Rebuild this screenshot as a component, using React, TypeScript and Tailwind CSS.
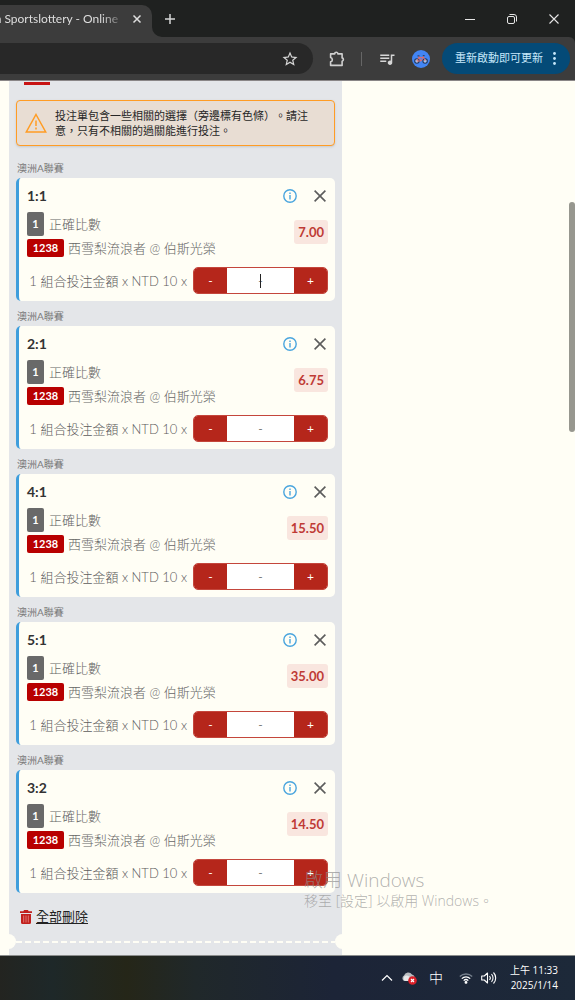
import { useState } from "react";
import { MdQueueMusic, MdStarBorder } from "react-icons/md";

type Bet = {
  id: number;
  score: string;
  odds: string;
};

const bets: Bet[] = [
  { id: 1, score: "1:1", odds: "7.00" },
  { id: 2, score: "2:1", odds: "6.75" },
  { id: 3, score: "4:1", odds: "15.50" },
  { id: 4, score: "5:1", odds: "35.00" },
  { id: 5, score: "3:2", odds: "14.50" },
];

const PuzzleIcon = () => (
  <svg viewBox="0 0 16 16" className="size-4" fill="none" stroke="#d0d0d0" strokeWidth="1.6" strokeLinejoin="round">
    <path d="M1.6 2.9h4.1a1.6 1.6 0 0 1 3.2 0h4.2v4a1.7 1.7 0 0 1 0 3.3v4.2H1.6v-3.6a2.2 2.2 0 0 0 0-4.3z" />
  </svg>
);

const BikeAvatar = () => (
  <svg viewBox="0 0 18 18" className="size-[18px]">
    <circle cx="9" cy="9" r="9" fill="#4285f4" />
    <circle cx="4.9" cy="11" r="2.2" fill="#a9c4ee" stroke="#22355a" strokeWidth="1.1" />
    <circle cx="13.1" cy="11" r="2.2" fill="#a9c4ee" stroke="#22355a" strokeWidth="1.1" />
    <path d="M4.900 11 6.800 7.600h4.600L9 11zM9 11 6.400 6M13.100 11l-2-5" fill="none" stroke="#ee6a5f" strokeWidth="0.9" />
    <path d="M5.500 5.900h2M10.800 5.700h1.800" stroke="#22355a" strokeWidth="1" />
  </svg>
);

const BrowserHeader = () => (
  <header className="shrink-0 bg-[#1f2120] font-['Open_Sans','Noto_Sans_CJK_TC',sans-serif]">
    <div className="flex h-[37px] items-end">
      <div className="relative flex h-8 w-[152px] items-center rounded-tr-[10px] bg-[#3c3c3c] pb-1">
        <div className="flex w-[118px] justify-end overflow-hidden font-[Lato,sans-serif] text-xs whitespace-nowrap text-[#dedede] [mask-image:linear-gradient(to_right,black_85%,rgba(0,0,0,0.35))]">
          n Sportslottery - Online
        </div>
        <button aria-label="關閉分頁" className="ml-[14px]">
          <svg viewBox="0 0 10 10" className="size-[10px]" stroke="#dedede" strokeWidth="1.5">
            <path d="m1.5 1.5 7 7m0-7-7 7" />
          </svg>
        </button>
        <svg viewBox="0 0 10 10" className="absolute bottom-0 left-full size-[10px]" fill="#3c3c3c">
          <path d="M0 0v10h10A10 10 0 0 1 0 0" />
        </svg>
      </div>
      <div className="flex h-full flex-1 items-center">
        <button aria-label="新增分頁" className="ml-3">
          <svg viewBox="0 0 12 12" className="size-3" stroke="#d6d6d6" strokeWidth="1.5">
            <path d="M6 1v10M1 6h10" />
          </svg>
        </button>
        <div className="ml-auto flex items-center gap-8 pr-4">
          <button aria-label="最小化">
            <svg viewBox="0 0 10 10" className="size-[10px]" stroke="#e6e6e6">
              <path d="M0 5.5h10" />
            </svg>
          </button>
          <button aria-label="還原">
            <svg viewBox="0 0 10 10" className="size-[10px]" fill="none" stroke="#e6e6e6">
              <rect x="0.5" y="2.5" width="7" height="7" rx="1.5" />
              <path d="M2.5.5H7A2.5 2.5 0 0 1 9.5 3v4.5" />
            </svg>
          </button>
          <button aria-label="關閉">
            <svg viewBox="0 0 10 10" className="size-[10px]" stroke="#e6e6e6" strokeWidth="1.1">
              <path d="m.5.5 9 9m0-9-9 9" />
            </svg>
          </button>
        </div>
      </div>
    </div>

    <div className="flex h-11 items-center rounded-tr-md border-b border-[#8a8687] bg-[#3c3c3c] pr-[5px]">
      <div className="flex h-[31px] flex-1 items-center justify-end rounded-r-full bg-[#282828] pr-[14px]">
        <button aria-label="加入書籤">
          <MdStarBorder className="size-[18px] text-[#d6d6d6]" />
        </button>
      </div>
      <div className="flex items-center gap-4 px-4 pr-3">
        <button aria-label="擴充功能">
          <PuzzleIcon />
        </button>
        <span className="h-[14px] w-px bg-[#666]" />
        <button aria-label="媒體控制">
          <MdQueueMusic className="size-[18px] text-[#d6d6d6]" />
        </button>
        <button aria-label="個人資料">
          <BikeAvatar />
        </button>
      </div>
      <button className="flex h-[31px] items-center gap-[10px] rounded-full bg-[#044a77] pr-[14px] pl-[13px] text-[11px] text-[#c6e8fb]">
        重新啟動即可更新
        <svg viewBox="0 0 3 13" className="h-[13px] w-[3px]" fill="#c6e8fb">
          <circle cx="1.5" cy="1.5" r="1.4" />
          <circle cx="1.5" cy="6.5" r="1.4" />
          <circle cx="1.5" cy="11.5" r="1.4" />
        </svg>
      </button>
    </div>
  </header>
);

const BetCard = ({ bet, focused }: { bet: Bet; focused: boolean }) => {
  const [amount, setAmount] = useState("");
  const fieldId = `stake-${bet.id}`;

  const change = (step: number) => {
    const next = Math.max(0, Number(amount || 0) + step);
    setAmount(next ? String(next) : "");
  };

  return (
    <article className="pt-2">
      <p className="mb-[3px] pl-px text-[10px] leading-[14px] text-[#7a7a7a]">澳洲A聯賽</p>
      <div className="rounded-[5px] border-l-3 border-[#3f9edc] bg-[#fffef5] pt-2 pr-[7px] pb-[7px] pl-2">
        <div className="flex h-5 items-center">
          <h3 className="text-sm leading-5 font-bold text-[#333]">{bet.score}</h3>
          <button aria-label="資訊" className="ml-auto">
            <svg viewBox="0 0 14 14" className="size-[14px]" fill="none" stroke="#4aa5de" strokeWidth="1.4">
              <circle cx="7" cy="7" r="6.2" />
              <path d="M7 6v4.5M7 3.5V5" />
            </svg>
          </button>
          <button aria-label="移除" className="mr-[2px] ml-[17px]">
            <svg viewBox="0 0 12 12" className="size-3" stroke="#5c5c5c" strokeWidth="1.6">
              <path d="m.6.6 10.8 10.8m0-10.8L.6 11.4" />
            </svg>
          </button>
        </div>

        <div className="mt-[6px] flex items-start justify-between text-[13px] text-[#666]">
          <div>
            <div className="flex h-6 items-center gap-[5px]">
              <span className="flex h-6 w-[17px] items-center justify-center rounded-[2px] bg-[#696969] text-[11px] font-bold text-white">
                1
              </span>
              <span className="leading-5 font-light">正確比數</span>
            </div>
            <div className="mt-[3px] flex h-[18px] items-center gap-1">
              <span className="flex h-[18px] w-[37px] items-center justify-center rounded-[2px] bg-[#b80000] text-[11px] font-bold text-white">
                1238
              </span>
              <span className="leading-[18px] font-light">西雪梨流浪者 @ 伯斯光榮</span>
            </div>
          </div>
          <span className="mt-2 rounded-[3px] bg-[#f9e6df] px-1 text-[13px] leading-6 font-bold text-[#bf3a35]">
            {bet.odds}
          </span>
        </div>

        <div className="mt-[10px] flex items-center justify-end gap-[6px]">
          <label htmlFor={fieldId} className="text-[13px] leading-5 font-light text-[#5c5c5c]">
            1 組合投注金額 x NTD 10 x
          </label>
          <div className="relative flex h-[27px] w-[135px] overflow-hidden rounded-[5px] border border-[#c4463c] bg-white text-xs">
            <button aria-label="減少" onClick={() => change(-1)} className="w-[33px] bg-[#b5261b] text-white">
              -
            </button>
            <input
              id={fieldId}
              value={amount}
              onChange={(e) => setAmount(e.target.value)}
              placeholder="-"
              className="min-w-0 flex-1 bg-white text-center text-[#333] outline-none placeholder:text-[#777]"
            />
            <button aria-label="增加" onClick={() => change(1)} className="w-[33px] bg-[#b5261b] text-white">
              +
            </button>
            {focused && <span className="absolute inset-0 m-auto h-[14px] w-px bg-[#222]" />}
          </div>
        </div>
      </div>
    </article>
  );
};

const BetSlip = () => (
  <section className="relative h-full w-full max-w-[333px] bg-[#e4e6e9] px-[7px] pt-px">
    <div className="ml-2 h-[3px] w-[26px] bg-[#c81414]" />

    <div
      role="alert"
      className="mt-[15px] mb-[7px] flex items-center gap-2 rounded-[4px] border border-[#ff9c24] bg-[#e8ddd3] py-[7px] pr-4 pl-2 shadow"
    >
      <svg viewBox="0 0 22 20" className="h-5 w-[22px] shrink-0" fill="none" stroke="#ff9c24" strokeWidth="1.5">
        <path d="M11 1.500 20.700 19H1.300z" />
        <path d="M11 7.500v5.500M11 14.500v2" />
      </svg>
      <p className="text-[11px] leading-[15px] text-[#262626] [text-spacing-trim:space-all]">
        投注單包含一些相關的選擇（旁邊標有色條）。請注意，只有不相關的過關能進行投注。
      </p>
    </div>

    {bets.map((bet, index) => (
      <BetCard key={bet.id} bet={bet} focused={index === 0} />
    ))}

    <button className="mt-[14px] ml-1 flex h-5 items-center gap-1 text-[13px] text-[#222]">
      <svg viewBox="0 0 12 14" className="h-[14px] w-3" fill="#c1201d">
        <path d="M4 0h4l.6 1.300H12V3H0V1.300h3.400zM1 4h10v8.500A1.500 1.500 0 0 1 9.500 14h-7A1.500 1.500 0 0 1 1 12.500z" />
        <path d="M3.700 5.500v7M6 5.500v7M8.300 5.500v7" stroke="#ef9c98" strokeWidth="0.700" />
      </svg>
      <span className="underline underline-offset-2">全部刪除</span>
    </button>

    {/* ticket tear line */}
    <div className="mt-[14px] h-[2px] bg-[repeating-linear-gradient(to_right,#fffef5_0_6px,transparent_6px_9px)]">
      <span className="absolute -left-2 -mt-[7px] size-[15px] rounded-full bg-[#fffef5]" />
      <span className="absolute -right-2 -mt-[7px] size-[15px] rounded-full bg-[#fffef5]" />
    </div>
  </section>
);

const Taskbar = () => (
  <footer className="flex h-[45px] shrink-0 items-center justify-end border-t border-[#8b8d8c] bg-[linear-gradient(to_right,#232420,#1e2829_9%,#252618_22%,#20282a_34%,#1c2437_58%,#1d2939)] pr-[17px] font-['Open_Sans','Noto_Sans_CJK_TC',sans-serif] text-white">
    <button aria-label="顯示隱藏的圖示">
      <svg viewBox="0 0 12 8" className="h-2 w-3" fill="none" stroke="#fff" strokeWidth="1.2">
        <path d="m1 6.500 5-5 5 5" />
      </svg>
    </button>
    <button aria-label="OneDrive" className="ml-2">
      <svg viewBox="0 0 16 14" className="h-[14px] w-4">
        <path d="M3.500 10A3 3 0 0 1 3 4.500 4.500 4.500 0 0 1 11 3.500a3.500 3.500 0 0 1 1 6.500z" fill="#b9bcc0" />
        <path d="M4 10a3 3 0 0 1 1-5.500c3 0 4 2 7 3V10z" fill="#e6e7e8" />
        <circle cx="11.500" cy="9.500" r="4.300" fill="#db2029" />
        <path d="m10 8 3 3m0-3-3 3" stroke="#fff" strokeWidth="1.2" />
      </svg>
    </button>
    <span className="ml-3 text-sm leading-5 font-light">中</span>
    <button aria-label="網路" className="ml-4">
      <svg viewBox="0 0 14 12" className="h-3 w-[14px]" fill="none" stroke="#fff" strokeWidth="1.3">
        <path d="M.8 4.500a9 9 0 0 1 12.400 0" stroke="#76808d" />
        <path d="M2.800 6.600a6 6 0 0 1 8.400 0M4.700 8.600a3.300 3.300 0 0 1 4.600 0" />
        <circle cx="7" cy="10.400" r="0.800" fill="#fff" />
      </svg>
    </button>
    <button aria-label="音量" className="ml-2">
      <svg viewBox="0 0 16 14" className="h-[14px] w-4" fill="none" stroke="#fff" strokeWidth="1.1" strokeLinejoin="round">
        <path d="M.7 5v4h2.600l3.200 3V2L3.300 5z" />
        <path d="M8.500 5a3 3 0 0 1 0 4M10.500 3.200a5.500 5.500 0 0 1 0 7.600M12.500 1.500a8 8 0 0 1 0 11" />
      </svg>
    </button>
    <div className="ml-[13px] text-right text-[10px] leading-[15px]">
      <p>上午 11:33</p>
      <p>2025/1/14</p>
    </div>
  </footer>
);

export default function App() {
  return (
    <div className="flex h-screen flex-col overflow-hidden bg-[#fffef5]">
      <BrowserHeader />
      <main className="relative min-h-0 flex-1 overflow-hidden pl-[9px] font-[Lato,'Noto_Sans_CJK_TC',sans-serif]">
        <BetSlip />
        <div className="absolute top-[121px] right-0 h-[230px] w-[6px] rounded-full bg-[#97978f]" />
        <div className="pointer-events-none absolute right-[78px] bottom-[44px] w-[193px] font-['Open_Sans','Noto_Sans_CJK_TC',sans-serif] font-light whitespace-nowrap text-[#8f8f8f]/70">
          <p className="text-[19px] leading-[22px]">啟用 Windows</p>
          <p className="text-sm leading-5">移至 [設定] 以啟用 Windows。</p>
        </div>
      </main>
      <Taskbar />
    </div>
  );
}
